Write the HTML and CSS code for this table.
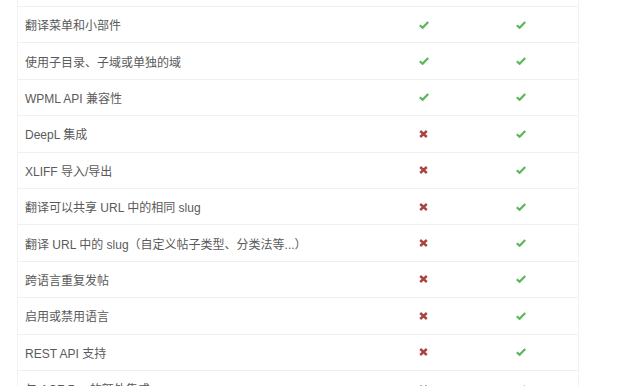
FILE: index.html
```html
<!DOCTYPE html>
<html lang="zh">
<head>
<meta charset="utf-8">
<link rel="stylesheet" href="styles.css">
</head>
<body>
<div class="table">
  <div class="row"><div class="name"></div><div class="cell"></div><div class="cell"></div></div>
  <div class="row"><div class="name">翻译菜单和小部件</div><div class="cell"><svg class="ok" viewBox="0 0 10 8"><path d="M0.8 4.2 L3.6 6.8 L9.2 0.9"/></svg></div><div class="cell"><svg class="ok" viewBox="0 0 10 8"><path d="M0.8 4.2 L3.6 6.8 L9.2 0.9"/></svg></div></div>
  <div class="row"><div class="name">使用子目录、子域或单独的域</div><div class="cell"><svg class="ok" viewBox="0 0 10 8"><path d="M0.8 4.2 L3.6 6.8 L9.2 0.9"/></svg></div><div class="cell"><svg class="ok" viewBox="0 0 10 8"><path d="M0.8 4.2 L3.6 6.8 L9.2 0.9"/></svg></div></div>
  <div class="row"><div class="name">WPML API 兼容性</div><div class="cell"><svg class="ok" viewBox="0 0 10 8"><path d="M0.8 4.2 L3.6 6.8 L9.2 0.9"/></svg></div><div class="cell"><svg class="ok" viewBox="0 0 10 8"><path d="M0.8 4.2 L3.6 6.8 L9.2 0.9"/></svg></div></div>
  <div class="row"><div class="name">DeepL 集成</div><div class="cell"><svg class="no" viewBox="0 0 9 8"><path d="M1.2 1 L7.8 7 M7.8 1 L1.2 7"/></svg></div><div class="cell"><svg class="ok" viewBox="0 0 10 8"><path d="M0.8 4.2 L3.6 6.8 L9.2 0.9"/></svg></div></div>
  <div class="row"><div class="name">XLIFF 导入/导出</div><div class="cell"><svg class="no" viewBox="0 0 9 8"><path d="M1.2 1 L7.8 7 M7.8 1 L1.2 7"/></svg></div><div class="cell"><svg class="ok" viewBox="0 0 10 8"><path d="M0.8 4.2 L3.6 6.8 L9.2 0.9"/></svg></div></div>
  <div class="row"><div class="name">翻译可以共享 URL 中的相同 slug</div><div class="cell"><svg class="no" viewBox="0 0 9 8"><path d="M1.2 1 L7.8 7 M7.8 1 L1.2 7"/></svg></div><div class="cell"><svg class="ok" viewBox="0 0 10 8"><path d="M0.8 4.2 L3.6 6.8 L9.2 0.9"/></svg></div></div>
  <div class="row"><div class="name">翻译 URL 中的 slug（自定义帖子类型、分类法等...）</div><div class="cell"><svg class="no" viewBox="0 0 9 8"><path d="M1.2 1 L7.8 7 M7.8 1 L1.2 7"/></svg></div><div class="cell"><svg class="ok" viewBox="0 0 10 8"><path d="M0.8 4.2 L3.6 6.8 L9.2 0.9"/></svg></div></div>
  <div class="row"><div class="name">跨语言重复发帖</div><div class="cell"><svg class="no" viewBox="0 0 9 8"><path d="M1.2 1 L7.8 7 M7.8 1 L1.2 7"/></svg></div><div class="cell"><svg class="ok" viewBox="0 0 10 8"><path d="M0.8 4.2 L3.6 6.8 L9.2 0.9"/></svg></div></div>
  <div class="row"><div class="name">启用或禁用语言</div><div class="cell"><svg class="no" viewBox="0 0 9 8"><path d="M1.2 1 L7.8 7 M7.8 1 L1.2 7"/></svg></div><div class="cell"><svg class="ok" viewBox="0 0 10 8"><path d="M0.8 4.2 L3.6 6.8 L9.2 0.9"/></svg></div></div>
  <div class="row"><div class="name">REST API 支持</div><div class="cell"><svg class="no" viewBox="0 0 9 8"><path d="M1.2 1 L7.8 7 M7.8 1 L1.2 7"/></svg></div><div class="cell"><svg class="ok" viewBox="0 0 10 8"><path d="M0.8 4.2 L3.6 6.8 L9.2 0.9"/></svg></div></div>
  <div class="row"><div class="name">与 ACF Pro 的额外集成</div><div class="cell"><svg class="no" viewBox="0 0 9 8"><path d="M1.2 1 L7.8 7 M7.8 1 L1.2 7"/></svg></div><div class="cell"><svg class="ok" viewBox="0 0 10 8"><path d="M0.8 4.2 L3.6 6.8 L9.2 0.9"/></svg></div></div>
</div>
</body>
</html>
```
FILE: styles.css
```css
html, body {
  margin: 0;
  padding: 0;
  background: #fff;
  overflow: hidden;
}
.table {
  margin-left: 17px;
  width: 560px;
  margin-top: -29.4px;
  border-left: 1px solid #f2f2f2;
  border-right: 1px solid #f2f2f2;
  font-family: "Liberation Sans", "Noto Sans CJK SC", sans-serif;
  font-size: 12px;
  color: #5a5a5a;
}
.row {
  display: grid;
  grid-template-columns: 1fr 97px 97px;
  padding-right: 9px;
  height: 36.4px;
  box-sizing: border-box;
  border-bottom: 1px solid #f0f0f0;
  align-items: center;
}
.name {
  padding-left: 7px;
  white-space: nowrap;
}
.cell {
  display: flex;
  justify-content: center;
  align-items: center;
}
.ok {
  width: 10px;
  height: 8px;
  fill: none;
  stroke: #5cb85c;
  stroke-width: 2.2;
}
.no {
  width: 9px;
  height: 8px;
  fill: none;
  stroke: #a94442;
  stroke-width: 2.4;
}
```
